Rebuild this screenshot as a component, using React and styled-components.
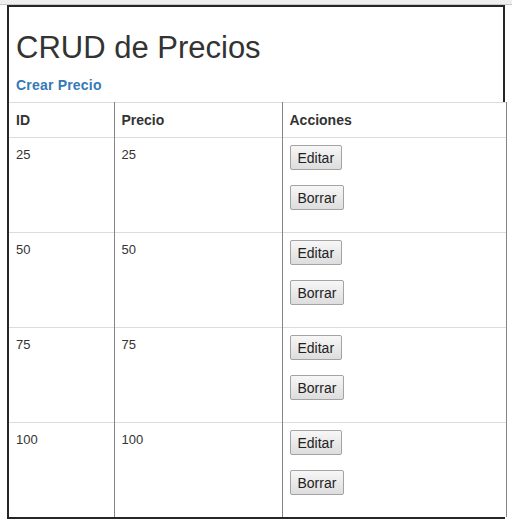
import React from "react";
import styled, { createGlobalStyle } from "styled-components";

const Global = createGlobalStyle`
  html, body { margin: 0; padding: 0; background: #fff; }
  body { font-family: "Liberation Sans", Arial, sans-serif; color: #333; }
`;

const TopBar = styled.div`
  height: 4px;
  background: #efefef;
  border-bottom: 1px solid #c9c9c9;
`;

const Frame = styled.div`
  margin-left: 7px;
  width: 496px;
  border-left: 2px solid #262626;
  border-top: 2px solid #262626;
  border-bottom: 2px solid #262626;
`;

const Header = styled.div`
  padding: 24px 7px 7px 7px;
  border-right: 2px solid #262626;
`;

const Title = styled.h2`
  margin: 0;
  font-size: 31px;
  font-weight: 400;
  line-height: 33px;
  color: #333;
`;

const CreateLink = styled.a`
  display: block;
  margin-top: 11px;
  font-size: 14px;
  font-weight: 700;
  line-height: 20px;
  color: #337ab7;
  text-decoration: none;
  letter-spacing: 0.2px;
`;

const Table = styled.table`
  width: 498px;
  border-collapse: collapse;
  table-layout: fixed;
`;

const Th = styled.th`
  text-align: left;
  font-size: 14px;
  font-weight: 700;
  line-height: 20px;
  padding: 7px 7px;
  height: 20px;
  border-top: 1px solid #dcdcdc;
  border-right: 1px solid #858585;
  color: #333;
`;

const Td = styled.td`
  vertical-align: top;
  font-size: 13px;
  line-height: 20px;
  padding: 7px 7px;
  height: ${(p) => p.$h}px;
  box-sizing: border-box;
  border-top: 1px solid #dcdcdc;
  border-right: 1px solid #858585;
  color: #333;
`;

const Actions = styled.div`
  display: flex;
  flex-direction: column;
  align-items: flex-start;
  gap: 15px;
`;

const Button = styled.button`
  height: 25px;
  padding: 0 7px;
  font-family: "Liberation Sans", Arial, sans-serif;
  font-size: 14px;
  color: #222;
  border: 1px solid #a3a3a3;
  border-radius: 2px;
  background: linear-gradient(#f7f7f7, #dddddd);
  cursor: pointer;
`;

const rows = [25, 50, 75, 100];

export default function App() {
  return (
    <>
      <Global />
      <TopBar />
      <Frame>
        <Header>
          <Title>CRUD de Precios</Title>
          <CreateLink href="#">Crear Precio</CreateLink>
        </Header>
        <Table>
          <colgroup>
            <col style={{ width: 105 }} />
            <col style={{ width: 168 }} />
            <col />
          </colgroup>
          <thead>
            <tr>
              <Th>ID</Th>
              <Th>Precio</Th>
              <Th>Acciones</Th>
            </tr>
          </thead>
          <tbody>
            {rows.map((r, i) => (
              <tr key={r}>
                <Td $h={i === rows.length - 1 ? 94 : 95}>{r}</Td>
                <Td $h={i === rows.length - 1 ? 94 : 95}>{r}</Td>
                <Td $h={i === rows.length - 1 ? 94 : 95}>
                  <Actions>
                    <Button>Editar</Button>
                    <Button>Borrar</Button>
                  </Actions>
                </Td>
              </tr>
            ))}
          </tbody>
        </Table>
      </Frame>
    </>
  );
}
